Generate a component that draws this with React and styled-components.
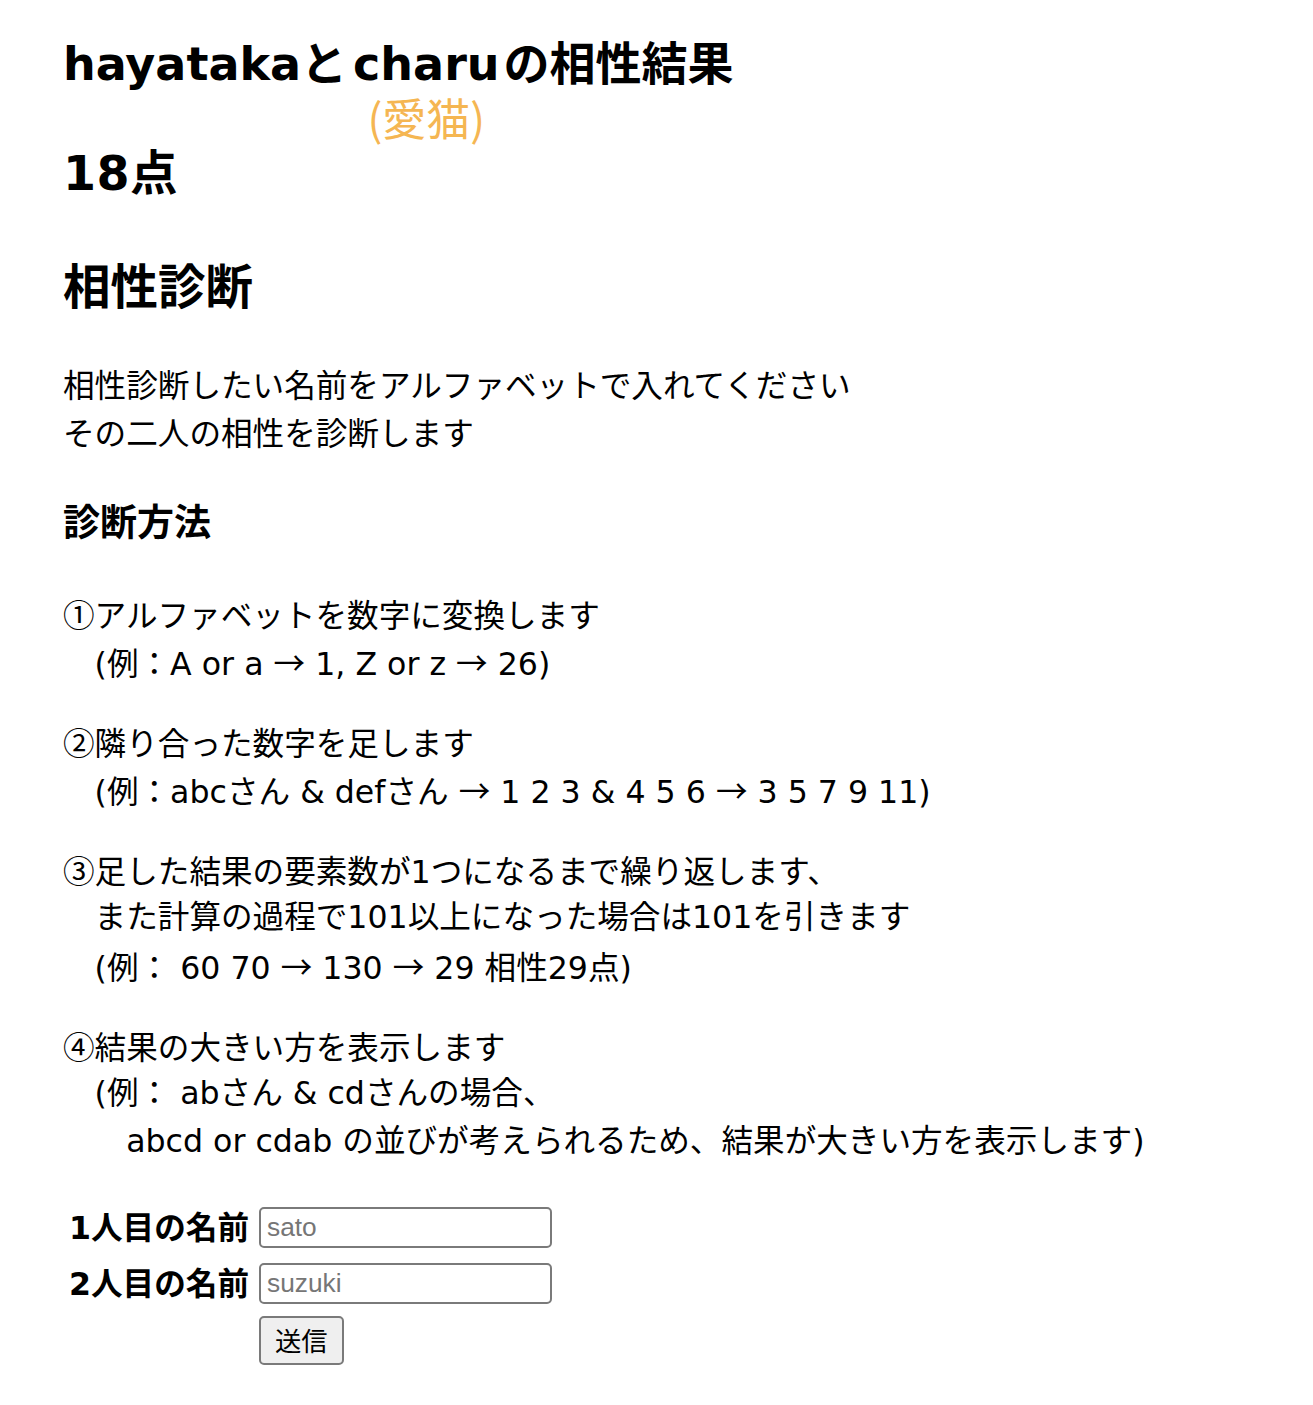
import React from "react";
import styled, { createGlobalStyle } from "styled-components";

const GlobalStyle = createGlobalStyle`
  html, body {
    margin: 0;
    padding: 0;
    background: #ffffff;
  }
  body {
    font-family: "DejaVu Sans", "Noto Sans CJK JP", sans-serif;
    color: #000000;
  }
`;

const Page = styled.main`
  padding: 30px 40px 40px 63px;
`;

const Title = styled.h1`
  margin: 0;
  height: 107px;
  font-size: 46px;
  line-height: 68px;
  font-weight: 700;
  white-space: nowrap;
`;

const Annotated = styled.span`
  display: inline-flex;
  flex-direction: column;
  align-items: center;
  vertical-align: top;
  padding: 0 4px 0 6px;
`;

const Annotation = styled.span`
  font-family: "Noto Sans CJK JP", sans-serif;
  font-size: 44px;
  line-height: 38px;
  font-weight: 400;
  color: #f5b652;
  white-space: nowrap;
`;

const Score = styled.h2`
  margin: 1px 0 0;
  height: 71px;
  font-size: 47.5px;
  line-height: 71px;
  font-weight: 700;
  letter-spacing: 0.5px;
`;

const SectionTitle = styled.h2`
  margin: 42.5px 0 0;
  height: 71px;
  font-size: 47.5px;
  line-height: 71px;
  font-weight: 700;
`;

const SubTitle = styled.h3`
  margin: 37.75px 0 0;
  height: 55.5px;
  font-size: 37px;
  line-height: 55.5px;
  font-weight: 700;
`;

const Text = styled.div`
  margin: ${(p) => p.$top || 32}px 0 0;
  font-size: 31.6px;
  line-height: 48px;
  white-space: nowrap;
`;

const Line = styled.div`
  height: 48px;
`;

const Mark = styled.span`
  font-family: "Noto Sans CJK JP", sans-serif;
`;

const Arrow = () => <Mark>→</Mark>;

const Form = styled.form`
  margin-top: 35.5px;
  display: grid;
  grid-template-columns: 186px 293px;
  grid-template-rows: 54px 54px auto;
  row-gap: 2px;
  column-gap: 10px;
  align-items: center;
`;

const Label = styled.label`
  justify-self: end;
  font-size: 31.6px;
  font-weight: 700;
  line-height: 48px;
  height: 48px;
  white-space: nowrap;
`;

const Input = styled.input`
  box-sizing: border-box;
  width: 293px;
  height: 41px;
  border: 2px solid #7a7a7a;
  border-radius: 5px;
  padding: 0 6px;
  font-family: "Liberation Sans", Arial, sans-serif;
  font-size: 26.3px;
  color: #000;
  background: #fff;
  &::placeholder {
    color: #767676;
  }
`;

const SubmitButton = styled.button`
  grid-column: 2;
  justify-self: start;
  align-self: start;
  margin-top: 3.5px;
  box-sizing: border-box;
  height: 49px;
  padding: 0 14px;
  background: #efefef;
  border: 2px solid #7a7a7a;
  border-radius: 5px;
  font-family: "Noto Sans CJK JP", sans-serif;
  font-size: 26.3px;
  line-height: 1;
  color: #000;
`;

const S = "\u3000";

export default function App() {
  return (
    <>
      <GlobalStyle />
      <Page>
        <Title>
          hayatakaと
          <Annotated>
            <span>charu</span>
            <Annotation>(愛猫)</Annotation>
          </Annotated>
          の相性結果
        </Title>
        <Score>18点</Score>

        <SectionTitle>相性診断</SectionTitle>
        <Text $top={39.5}>
          <Line>相性診断したい名前をアルファベットで入れてください</Line>
          <Line>その二人の相性を診断します</Line>
        </Text>

        <SubTitle>診断方法</SubTitle>
        <Text $top={37.75}>
          <Line>
            <Mark>①</Mark>アルファベットを数字に変換します
          </Line>
          <Line>
            {S}(例：A or a <Arrow /> 1, Z or z <Arrow /> 26)
          </Line>
        </Text>
        <Text>
          <Line>
            <Mark>②</Mark>隣り合った数字を足します
          </Line>
          <Line>
            {S}(例：abcさん & defさん <Arrow /> 1 2 3 & 4 5 6 <Arrow /> 3 5 7 9 11)
          </Line>
        </Text>
        <Text>
          <Line>
            <Mark>③</Mark>足した結果の要素数が1つになるまで繰り返します、
          </Line>
          <Line>{S}また計算の過程で101以上になった場合は101を引きます</Line>
          <Line>
            {S}(例： 60 70 <Arrow /> 130 <Arrow /> 29 相性29点)
          </Line>
        </Text>
        <Text>
          <Line>
            <Mark>④</Mark>結果の大きい方を表示します
          </Line>
          <Line>{S}(例： abさん & cdさんの場合、</Line>
          <Line>
            {S + S}abcd or cdab の並びが考えられるため、結果が大きい方を表示します)
          </Line>
        </Text>

        <Form onSubmit={(e) => e.preventDefault()}>
          <Label htmlFor="name1">1人目の名前</Label>
          <Input id="name1" type="text" placeholder="sato" />
          <Label htmlFor="name2">2人目の名前</Label>
          <Input id="name2" type="text" placeholder="suzuki" />
          <SubmitButton type="submit">送信</SubmitButton>
        </Form>
      </Page>
    </>
  );
}
